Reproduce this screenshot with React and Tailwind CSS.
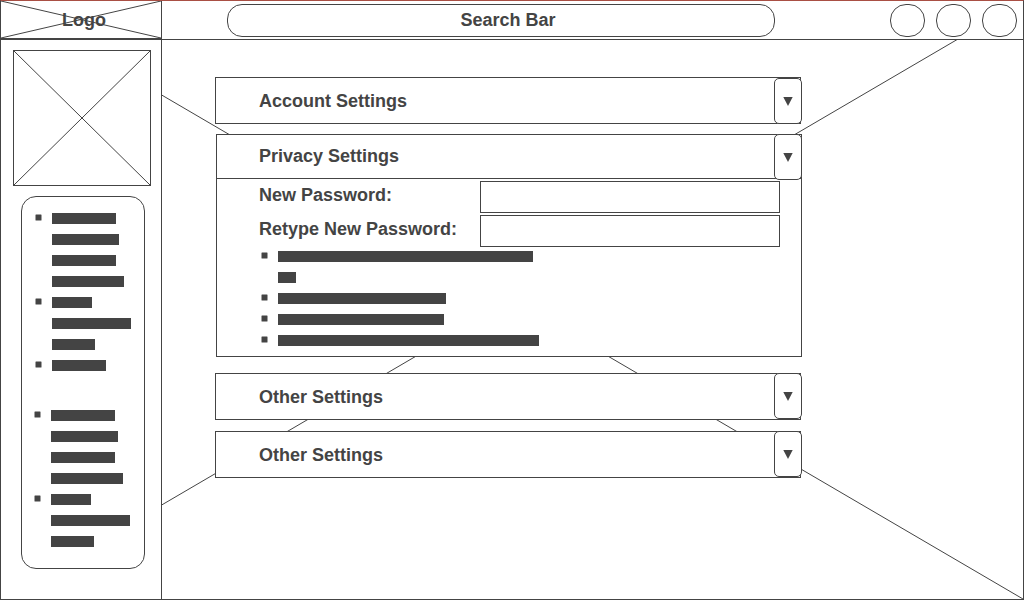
import React, { useState } from "react";

function Cross() {
  return (
    <svg aria-hidden="true" className="absolute inset-0 h-full w-full" stroke="#444" strokeWidth="1">
      <line x1="0" y1="0" x2="100%" y2="100%" />
      <line x1="100%" y1="0" x2="0" y2="100%" />
    </svg>
  );
}

const MENU = [
  { width: 64, bullet: true },
  { width: 67 },
  { width: 64 },
  { width: 72 },
  { width: 40, bullet: true },
  { width: 79 },
  { width: 43 },
  { width: 54, bullet: true },
];

const NOTES = [
  { width: 255, bullet: true },
  { width: 18 },
  { width: 168, bullet: true },
  { width: 166, bullet: true },
  { width: 261, bullet: true },
];

function Lines({ items, className }) {
  return (
    <ul className={`flex flex-col gap-[10px] ${className}`}>
      {items.map((item, i) => (
        <li key={i} className="flex h-[11px] gap-[10px]">
          <svg aria-hidden="true" width="7" height="9" viewBox="0 0 7 9" className="shrink-0" fill="#444">
            {item.bullet && <rect x="0.5" y="1.5" width="6" height="6" rx="0.5" />}
          </svg>
          <span className="h-[11px] bg-[#444]" style={{ width: item.width }} />
        </li>
      ))}
    </ul>
  );
}

function Toggle({ title, open, onClick, className }) {
  return (
    <button
      type="button"
      aria-label={`Toggle ${title}`}
      aria-expanded={open}
      onClick={onClick}
      className={`z-10 col-start-1 row-start-1 flex h-[46px] w-7 items-center justify-center justify-self-end rounded-[5px] border border-[#444] bg-white ${className}`}
    >
      <svg aria-hidden="true" width="10" height="9" viewBox="0 0 10 9" fill="#444">
        <polygon points="0.3,0 9.7,0 5,9" />
      </svg>
    </button>
  );
}

function Panel({ title, className = "", toggleClass = "self-start" }) {
  const [open, setOpen] = useState(false);
  return (
    <section className={`grid ${className}`}>
      <div className="col-start-1 row-start-1 mr-px flex h-[47px] items-center border border-[#444] bg-white pl-[43px]">
        <h2>{title}</h2>
      </div>
      <Toggle title={title} open={open} onClick={() => setOpen(!open)} className={toggleClass} />
    </section>
  );
}

function Field({ id, label }) {
  return (
    <div className="flex items-center">
      <label htmlFor={id} className="w-[221px] shrink-0 pb-1">
        {label}
      </label>
      <input id={id} type="password" className="h-8 min-w-0 flex-1 border border-[#444] bg-white px-2 outline-none" />
    </div>
  );
}

function PrivacyPanel() {
  const [open, setOpen] = useState(true);
  return (
    <section className="mt-[10px] ml-px grid">
      <div className="col-start-1 row-start-1 border border-[#444] bg-white">
        <div className="flex h-11 items-center border-b border-[#444] pb-[2px] pl-[42px]">
          <h2>Privacy Settings</h2>
        </div>
        {open && (
          <form className="pt-[2px] pr-[21px] pb-[10px] pl-[42px]">
            <div className="flex flex-col gap-[2px]">
              <Field id="new-password" label="New Password:" />
              <Field id="retype-password" label="Retype New Password:" />
            </div>
            <Lines items={NOTES} className="mt-1 pl-[2px]" />
          </form>
        )}
      </div>
      <Toggle title="Privacy Settings" open={open} onClick={() => setOpen(!open)} className="self-start" />
    </section>
  );
}

export default function App() {
  return (
    <div className="relative flex min-h-screen flex-col border border-[#444] border-t-[#a94f44] bg-white font-['Liberation_Sans',Arial,sans-serif] text-lg leading-5 font-bold text-[#444] [text-rendering:optimizeSpeed]">
      <Cross />
      <header className="relative flex border-b border-[#444] bg-white">
        <a
          href="#home"
          className="relative flex h-[38px] w-[161px] shrink-0 items-center justify-center border-r border-b border-[#444] pl-[6px]"
        >
          <Cross />
          <span className="relative">Logo</span>
        </a>
        <div className="flex min-w-0 flex-1 items-center pr-[6px] pl-[65px]">
          <input
            type="text"
            aria-label="Search Bar"
            placeholder="Search Bar"
            className="h-[33px] min-w-0 flex-1 rounded-[15px] border border-[#444] bg-white pl-[14px] text-center outline-none placeholder:text-[#444] placeholder:opacity-100"
          />
          <nav aria-label="Account" className="ml-[115px] flex gap-[11px]">
            <button type="button" aria-label="Notifications" className="h-[33px] w-[35px] rounded-2xl border border-[#444]" />
            <button type="button" aria-label="Messages" className="h-[33px] w-[35px] rounded-2xl border border-[#444]" />
            <button type="button" aria-label="Profile" className="h-[33px] w-[35px] rounded-2xl border border-[#444]" />
          </nav>
        </div>
      </header>

      <div className="relative flex flex-1">
        <aside className="w-[161px] shrink-0 border-r border-[#444] bg-white pt-[10px] pr-[10px] pl-3">
          <div className="relative h-[136px] border border-[#444]">
            <Cross />
          </div>
          <nav aria-label="Menu" className="mt-[10px] mr-[6px] ml-2 rounded-[15px] border border-[#444] pt-4 pb-[21px]">
            <Lines items={MENU} className="pl-[13px]" />
            <Lines items={MENU.slice(0, 7)} className="mt-[39px] pl-3" />
          </nav>
        </aside>

        <main className="min-w-0 flex-1 pt-[37px] pr-[221px] pb-10 pl-[53px]">
          <Panel title="Account Settings" toggleClass="self-end" />
          <PrivacyPanel />
          <Panel title="Other Settings" className="mt-4" />
          <Panel title="Other Settings" className="mt-[11px]" />
        </main>
      </div>
    </div>
  );
}
